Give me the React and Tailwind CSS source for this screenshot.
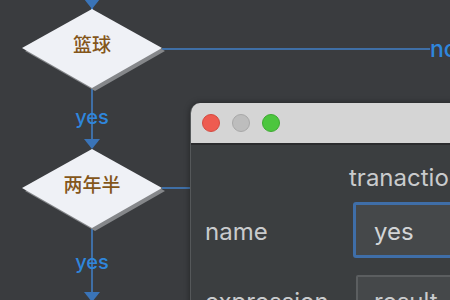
import React from "react";

const Diamond = ({ cx, cy }) => (
  <>
    <polygon
      points={`${cx + 3},${cy - 36} ${cx + 73},${cy + 3} ${cx + 3},${cy + 43} ${cx - 67},${cy + 3}`}
      fill="#85878a"
    />
    <polygon
      points={`${cx},${cy - 39} ${cx + 70},${cy} ${cx},${cy + 40} ${cx - 70},${cy}`}
      fill="#eff1f6"
    />
  </>
);

const Arrow = ({ x, y }) => (
  <polygon points={`${x - 8},${y - 10} ${x + 8},${y - 10} ${x},${y}`} fill="#3a74b8" />
);

const Label = ({ x, y, children, className }) => (
  <span
    className={`absolute -translate-x-1/2 -translate-y-1/2 whitespace-nowrap ${className}`}
    style={{ left: x, top: y }}
  >
    {children}
  </span>
);

export default function App() {
  return (
    <div
      className="relative w-[450px] h-[300px] overflow-hidden bg-[#3a3c3f]"
      style={{ fontFamily: "Inter, 'Noto Sans CJK SC', sans-serif" }}
    >
      <svg className="absolute inset-0" width="450" height="300">
        <line x1="92" y1="0" x2="92" y2="10" stroke="#3a74b8" strokeWidth="2" />
        <Arrow x={92} y={9} />
        <line x1="162" y1="49" x2="430" y2="49" stroke="#3f6fa6" strokeWidth="2" />
        <line x1="92" y1="88" x2="92" y2="148" stroke="#3f6fa6" strokeWidth="2" />
        <Arrow x={92} y={149} />
        <line x1="162" y1="188" x2="195" y2="188" stroke="#3f6fa6" strokeWidth="2" />
        <line x1="92" y1="228" x2="92" y2="300" stroke="#3f6fa6" strokeWidth="2" />
        <Arrow x={92} y={302} />
        <Diamond cx={92} cy={48} />
        <Diamond cx={92} cy={188} />
      </svg>

      <Label x={92} y={46} className="text-[19px] font-medium text-[#84561a]">篮球</Label>
      <Label x={92} y={186} className="text-[19px] font-medium text-[#84561a]">两年半</Label>
      <Label x={92} y={117} className="text-[20px] font-medium text-[#2f86dc]">yes</Label>
      <Label x={92} y={262} className="text-[20px] font-medium text-[#2f86dc]">yes</Label>
      <span className="absolute left-[430px] top-[32px] text-[23px] font-medium text-[#2f86dc]">no</span>

      <div className="absolute left-[190px] top-[103px] w-[300px] h-[220px] rounded-t-[10px] overflow-hidden bg-[#3b3e40] border-l border-[#55585a] shadow-[0_0_6px_rgba(0,0,0,0.4)]">
        <div className="h-[42px] bg-[#d5d5d5] border-b-2 border-[#2b2c2e] flex items-center gap-3 pl-[11px]">
          <div className="w-[18px] h-[18px] rounded-full bg-[#ee5b50] border border-[#d44a40]" />
          <div className="w-[18px] h-[18px] rounded-full bg-[#bdbdbd] border border-[#a8a8a8]" />
          <div className="w-[18px] h-[18px] rounded-full bg-[#4cc63e] border border-[#3daa31]" />
        </div>
        <div className="text-[24px] leading-[28px] text-[#c9cbcd]">
          <div className="pl-[158px] pt-[19px]">tranaction</div>
          <div className="flex items-center mt-[10px] h-[56px]">
            <div className="w-[162px] pl-[14px] pt-[4px]">name</div>
            <div className="flex-1 h-full border-[3px] border-[#3f6ea8] rounded-[3px] bg-[#45484a] flex items-center pl-[18px] pt-[4px] text-[#d2d4d6]">yes</div>
          </div>
          <div className="flex items-start mt-[17px] h-[56px]">
            <div className="w-[162px] pl-[14px] pt-[13px]">expression</div>
            <div className="ml-[3px] flex-1 h-full border-[2px] border-[#5b5e60] rounded-[2px] bg-[#45484a] pl-[16px] pt-[11px]">result==</div>
          </div>
        </div>
      </div>
    </div>
  );
}
